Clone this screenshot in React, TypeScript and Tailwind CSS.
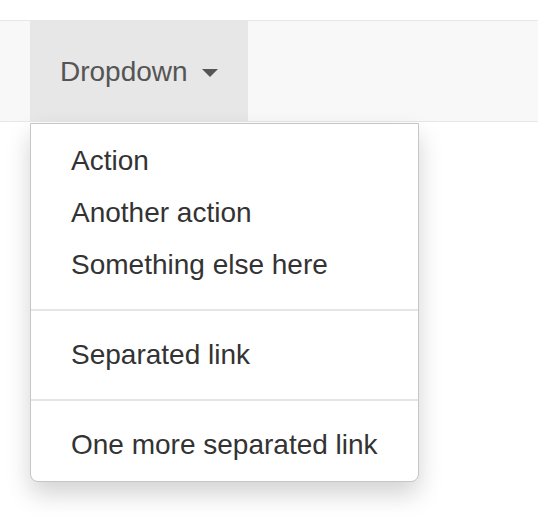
import React from 'react'

const items: (string | null)[] = [
  'Action',
  'Another action',
  'Something else here',
  null,
  'Separated link',
  null,
  'One more separated link',
]

export default function App() {
  return (
    <div className="min-h-[520px] w-[538px] bg-white pt-5 font-['Liberation_Sans',Arial,sans-serif]">
      <nav className="flex h-[102px] border-y border-[#e7e7e7] bg-[#f8f8f8] pl-[30px]">
        <div className="relative">
          <a className="flex h-full items-center bg-[#e7e7e7] px-[30px] pt-[2px] text-[28px] leading-[40px] text-[#555]">
            Dropdown
            <span className="ml-[14px] mt-[2px] inline-block h-0 w-0 border-x-8 border-t-8 border-x-transparent border-t-[#555]" />
          </a>

          <ul className="absolute left-0 top-[102px] z-10 min-w-[320px] whitespace-nowrap rounded-b-lg border border-[#c6c6c6] bg-white pb-[10px] pt-[11px] shadow-[0_12px_24px_rgba(0,0,0,0.175)]">
            {items.map((item, i) =>
              item ? (
                <li key={i} className="px-10 py-[6px] text-[28px] leading-[40px] text-[#333]">
                  {item}
                </li>
              ) : (
                <li key={i} className="my-[18px] h-[2px] bg-[#e5e5e5]" />
              )
            )}
          </ul>
        </div>
      </nav>
    </div>
  )
}
